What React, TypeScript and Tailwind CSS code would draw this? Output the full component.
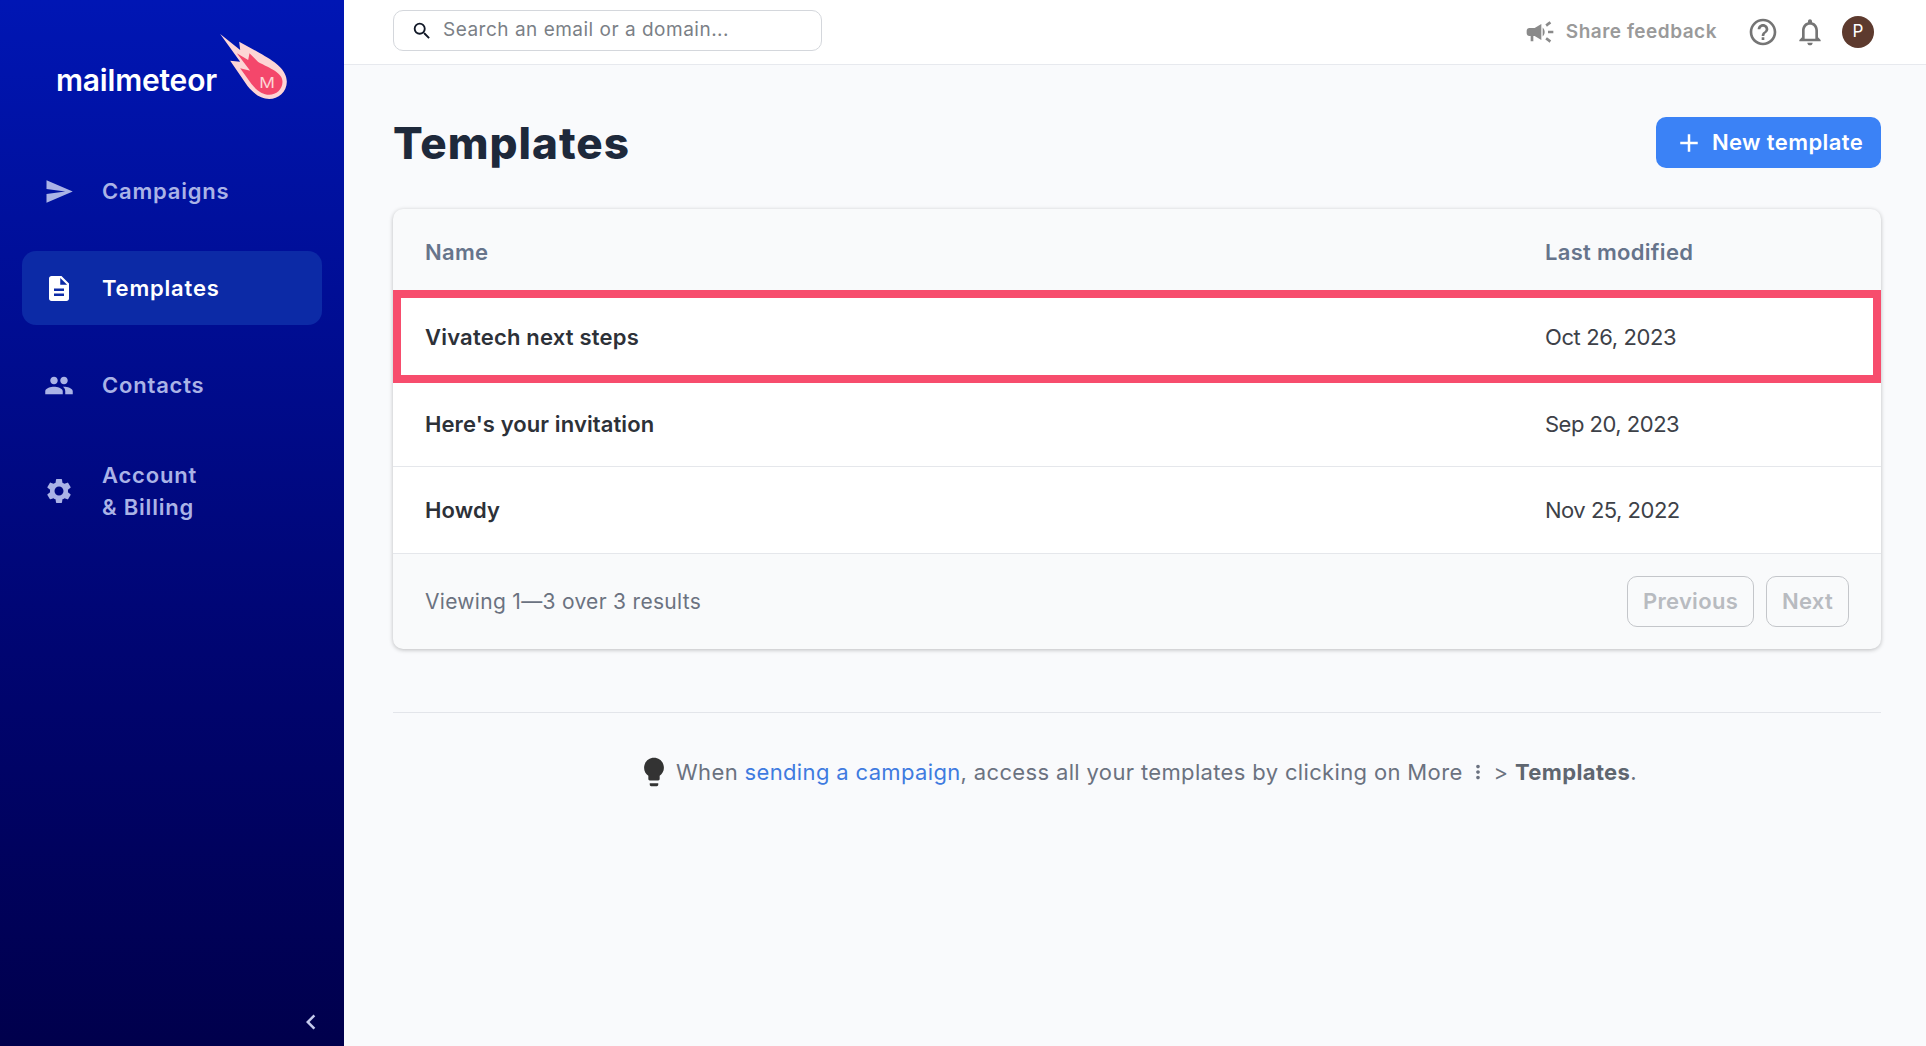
import React from 'react';
import {
  MdSend,
  MdDescription,
  MdPeople,
  MdSettings,
  MdSearch,
  MdCampaign,
  MdHelpOutline,
  MdNotificationsNone,
  MdAdd,
  MdLightbulb,
  MdMoreVert,
  MdChevronLeft,
} from 'react-icons/md';

const font = { fontFamily: 'Inter, "Liberation Sans", sans-serif' };

const Logo = () => (
  <svg width="67" height="65" viewBox="58 102 200 195" className="ml-[3px] shrink-0">
    <path
      d="M58 102 L118 150 L115 125 L175 158 C220 183 258 208 258 245 C258 275 232 297 205 297 C180 297 160 282 140 258 L88 182 L118 185 Z"
      fill="#fdd5d5"
    />
    <path
      d="M108 160 L142 180 L146 160 L172 186 C208 205 245 218 245 245 C245 268 226 284 205 284 C185 284 168 272 152 252 L118 205 L148 212 Z"
      fill="#f4476b"
    />
    <text
      x="175"
      y="263"
      fontSize="42"
      textLength="47"
      lengthAdjust="spacingAndGlyphs"
      fill="#fdd5d5"
      fontFamily="Inter, sans-serif"
    >
      M
    </text>
  </svg>
);

const NavItem = ({ icon, active, children }: { icon: React.ReactNode; active?: boolean; children: React.ReactNode }) => (
  <div
    className={`flex min-h-[74px] items-center gap-[28px] rounded-[14px] px-[22px] py-[14px] text-[22px] leading-[32px] font-semibold tracking-[0.8px] ${
      active ? 'bg-[#0c2aa6] text-white' : 'text-[#aab3e6]'
    }`}
  >
    <span className="flex w-[30px] shrink-0 justify-center">{icon}</span>
    <span>{children}</span>
  </div>
);

const Sidebar = () => (
  <aside className="flex h-full w-[344px] shrink-0 flex-col bg-gradient-to-b from-[#0016b4] to-[#00004c]">
    <div className="flex items-start pt-[34px] pl-[56px]">
      <span className="mt-[29px] text-[30px] leading-[34px] font-semibold tracking-[-0.2px] text-white">mailmeteor</span>
      <Logo />
    </div>
    <nav className="mt-[55px] flex flex-col gap-[23px] px-[22px]">
      <NavItem icon={<MdSend size={31} />}>Campaigns</NavItem>
      <NavItem icon={<MdDescription size={31} />} active>
        Templates
      </NavItem>
      <NavItem icon={<MdPeople size={33} />}>Contacts</NavItem>
      <NavItem icon={<MdSettings size={32} />}>
        Account
        <br />& Billing
      </NavItem>
    </nav>
    <div className="mt-auto flex justify-end pr-[18px] pb-[9px] text-[#c5cbee]">
      <MdChevronLeft size={30} />
    </div>
  </aside>
);

const Topbar = () => (
  <header className="flex h-[65px] shrink-0 items-center justify-between border-b border-[#e7e9ee] bg-white pr-[52px] pl-[49px]">
    <div className="mb-[3px] flex h-[41px] w-[429px] items-center gap-[10px] rounded-[10px] border-[1.5px] border-[#d4d7dc] bg-white px-[17px] text-[19px] tracking-[0.5px] text-[#7b7f86]">
      <MdSearch size={22} className="shrink-0 text-[#111827]" />
      <span>Search an email or a domain...</span>
    </div>
    <div className="flex items-center">
      <MdCampaign size={32} className="text-[#8a8a8a]" />
      <span className="ml-[10px] text-[19px] font-semibold tracking-[0.5px] text-[#9a9a9a]">Share feedback</span>
      <MdHelpOutline size={32} className="ml-[30px] text-[#757575]" />
      <MdNotificationsNone size={32} className="ml-[15px] text-[#757575]" />
      <div className="ml-[16px] flex h-[32px] w-[32px] items-center justify-center rounded-full bg-[#5d3a2e] text-[17px] text-white">
        P
      </div>
    </div>
  </header>
);

const Row = ({ name, date, last }: { name: string; date: string; last?: boolean }) => (
  <div className={`flex items-center bg-white pl-[32px] text-[22px] ${last ? 'h-[86px]' : 'h-[84px] border-b border-[#e5e7eb]'}`}>
    <span className="flex-1 font-semibold tracking-[0.1px] text-[#2d3138]">{name}</span>
    <span className="w-[336px] tracking-[-0.5px] text-[#3d4148]">{date}</span>
  </div>
);

const TemplatesTable = () => (
  <div className="mt-[41px] overflow-hidden rounded-[10px] bg-[#f9fafb] shadow-[0_1px_4px_rgba(0,0,0,0.25)]">
    <div className="flex h-[81px] items-center pt-[5px] pl-[32px] text-[22px] font-semibold tracking-[0.3px] text-[#66748b]">
      <span className="flex-1">Name</span>
      <span className="w-[336px]">Last modified</span>
    </div>
    <div className="flex h-[93px] items-center border-[8px] border-[#f74d6d] bg-white pt-[2px] pl-[24px] text-[22px]">
      <span className="flex-1 font-semibold tracking-[0.2px] text-[#2d3138]">Vivatech next steps</span>
      <span className="w-[328px] tracking-[-0.4px] text-[#3d4148]">Oct 26, 2023</span>
    </div>
    <Row name="Here's your invitation" date="Sep 20, 2023" />
    <Row name="Howdy" date="Nov 25, 2022" last />
    <div className="flex h-[96px] items-center justify-between border-t border-[#e5e7eb] px-[32px] text-[21px] tracking-[0.3px] text-[#6b7280]">
      <span>Viewing 1—3 over 3 results</span>
      <div className="flex gap-[12px] text-[22px] font-semibold text-[#b8bbc0]">
        <span className="flex h-[51px] w-[127px] items-center justify-center rounded-[10px] border border-[#c4c6ca]">Previous</span>
        <span className="flex h-[51px] w-[83px] items-center justify-center rounded-[10px] border border-[#c4c6ca]">Next</span>
      </div>
    </div>
  </div>
);

const Tip = () => (
  <div className="mt-[42px] flex items-center justify-center text-[22px] tracking-[0.35px] text-[#6b7280]">
    <MdLightbulb size={34} className="mr-[5px] text-[#333]" />
    <span>
      When <span className="text-[#3f7be0]">sending a campaign</span>, access all your templates by clicking on More
    </span>
    <MdMoreVert size={22} className="ml-[4px] mr-[5px] text-[#6b7280]" />
    <span>
      &gt; <strong className="font-bold text-[#5f6670]">Templates</strong>.
    </span>
  </div>
);

export default function App() {
  return (
    <div className="flex h-screen w-full overflow-hidden bg-[#f9fafc]" style={font}>
      <Sidebar />
      <div className="flex min-w-0 flex-1 flex-col">
        <Topbar />
        <main className="flex-1 pt-[52px] pr-[45px] pl-[49px]">
          <div className="flex h-[51px] items-center justify-between">
            <h1 className="text-[44px] font-extrabold tracking-[1px] text-[#1e293b]">Templates</h1>
            <button className="flex h-[51px] w-[225px] items-center justify-center gap-[8px] rounded-[10px] bg-[#3b82f6] text-[22px] font-semibold tracking-[0.4px] text-white">
              <MdAdd size={30} />
              New template
            </button>
          </div>
          <TemplatesTable />
          <div className="mt-[63px] border-t border-[#e3e5ea]" />
          <Tip />
        </main>
      </div>
    </div>
  );
}
